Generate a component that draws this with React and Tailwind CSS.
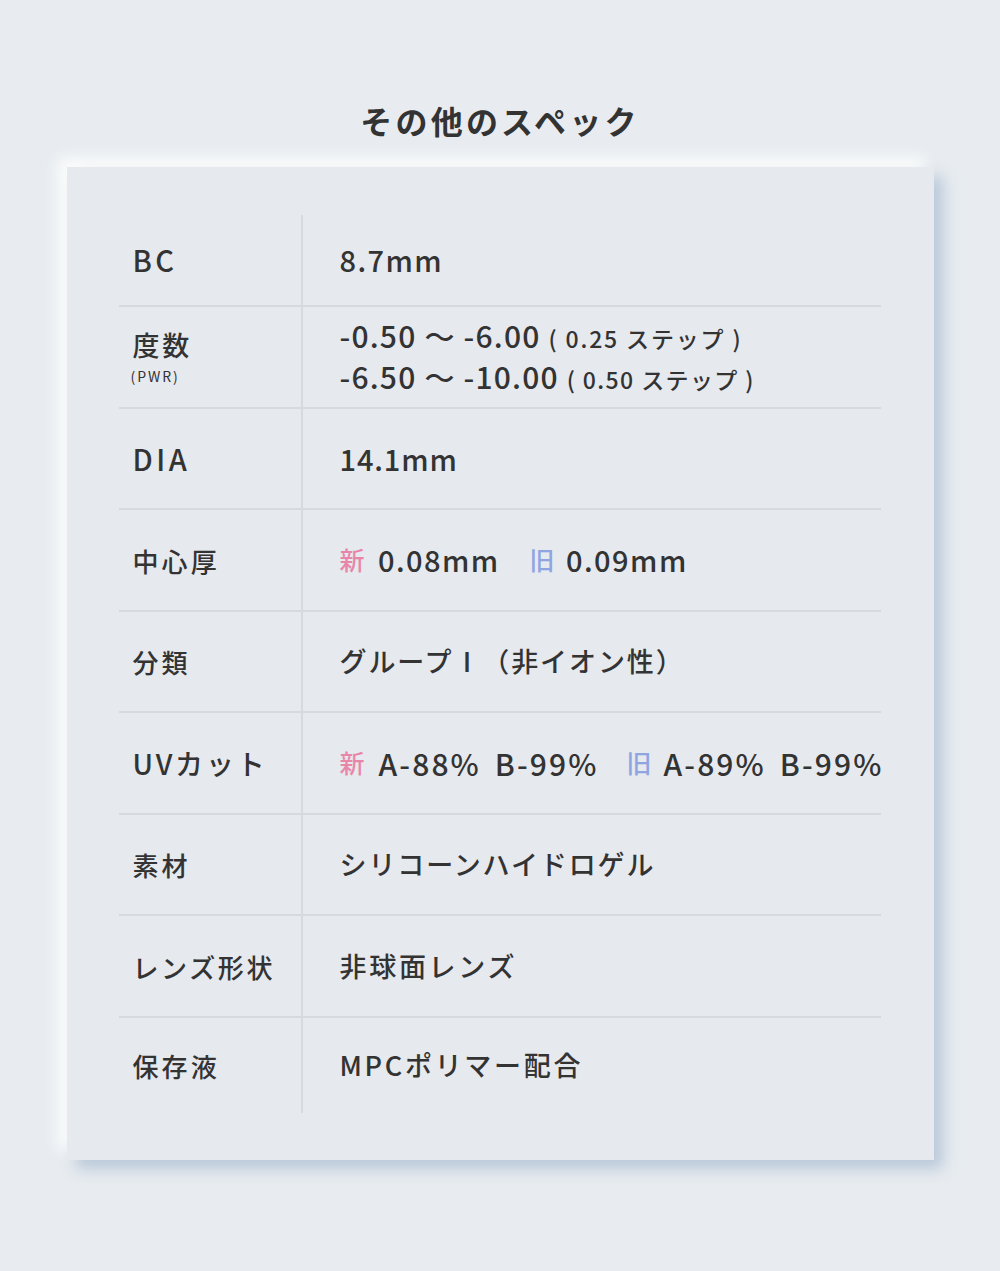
import React from "react";

const font = { fontFamily: '"Noto Sans CJK JP", "Noto Sans", sans-serif' };

function New() {
  return <span className="text-[25px] font-medium text-[#e886a9] mr-[12px]">新</span>;
}
function Old() {
  return <span className="text-[25px] font-medium text-[#8ea5e2] mr-[10px]">旧</span>;
}

const rows = [
  { h: "h-[92px]", label: <span className="text-[29px] tracking-[0.12em] font-medium">BC</span>, value: <span>8.7mm</span> },
  {
    h: "h-[102px]",
    label: (
      <div className="flex flex-col">
        <span className="text-[27px] leading-[30px] tracking-[0.1em] font-medium">度数</span>
        <span className="text-[14px] leading-[16px] tracking-[0.14em] mt-[8px] -ml-[2px]">(PWR)</span>
      </div>
    ),
    value: (
      <div className="flex flex-col leading-[38px] text-[30px] tracking-[0.04em]">
        <span>
          -0.50 ～ -6.00 <span className="text-[23px] tracking-[0.08em]">( 0.25 ステップ )</span>
        </span>
        <span>
          -6.50 ～ -10.00 <span className="text-[23px] tracking-[0.06em]">( 0.50 ステップ )</span>
        </span>
      </div>
    ),
  },
  { h: "h-[101px]", label: <span className="text-[29px] tracking-[0.12em] font-medium">DIA</span>, value: <span className="tracking-[0.03em]">14.1mm</span> },
  {
    h: "h-[102px]",
    label: <span className="text-[26px] tracking-[0.12em] font-medium">中心厚</span>,
    value: (
      <span className="flex items-center">
        <New />
        <span>0.08mm</span>
        <span className="w-[30px]" />
        <Old />
        <span>0.09mm</span>
      </span>
    ),
  },
  {
    h: "h-[101px]",
    label: <span className="text-[26px] tracking-[0.12em] font-medium">分類</span>,
    value: <span className="font-medium text-[27px] tracking-[0.07em]">グループⅠ（非イオン性）</span>,
  },
  {
    h: "h-[102px]",
    label: <span className="text-[28px] tracking-[0.1em] font-medium">UVカット</span>,
    value: (
      <span className="flex items-center whitespace-nowrap text-[30px] tracking-[0.07em]">
        <New />
        <span>A-88%</span>
        <span className="w-[14px]" />
        <span>B-99%</span>
        <span className="w-[28px]" />
        <Old />
        <span>A-89%</span>
        <span className="w-[14px]" />
        <span>B-99%</span>
      </span>
    ),
  },
  {
    h: "h-[101px]",
    label: <span className="text-[26px] tracking-[0.12em] font-medium">素材</span>,
    value: <span className="font-medium text-[27px] tracking-[0.07em]">シリコーンハイドロゲル</span>,
  },
  {
    h: "h-[102px]",
    label: <span className="text-[26px] tracking-[0.1em] font-medium">レンズ形状</span>,
    value: <span className="font-medium text-[27px] tracking-[0.1em]">非球面レンズ</span>,
  },
  {
    h: "h-[95px]",
    label: <span className="text-[26px] tracking-[0.12em] font-medium">保存液</span>,
    value: <span className="font-medium text-[27px] tracking-[0.1em]">MPCポリマー配合</span>,
    last: true,
  },
];

export default function App() {
  return (
    <div className="w-[1000px] h-[1271px] bg-[#e8ecf0] text-[#333333] flex flex-col items-center" style={font}>
      <h2 className="mt-[98px] text-[32px] font-bold tracking-[0.1em] leading-[44px]">その他のスペック</h2>
      <div className="mt-[25px] w-[867px] h-[993px] bg-[#e6e9ee] shadow-[9px_9px_14px_rgba(170,188,210,0.75),-9px_-9px_14px_rgba(255,255,255,0.9)] px-[52px] pt-[48px]">
        <div className="flex flex-col w-[762px]">
          {rows.map((r, i) => (
            <div
              key={i}
              className={`flex ${r.h} ${r.last ? "" : "border-b-2 border-[#d6dadf]"}`}
            >
              <div className="w-[184px] shrink-0 flex items-center pl-[14px] border-r-2 border-[#d6dadf]">
                {r.label}
              </div>
              <div className="flex-1 flex items-center pl-[37px] text-[29px] font-medium tracking-[0.05em] whitespace-nowrap">
                {r.value}
              </div>
            </div>
          ))}
        </div>
      </div>
    </div>
  );
}
